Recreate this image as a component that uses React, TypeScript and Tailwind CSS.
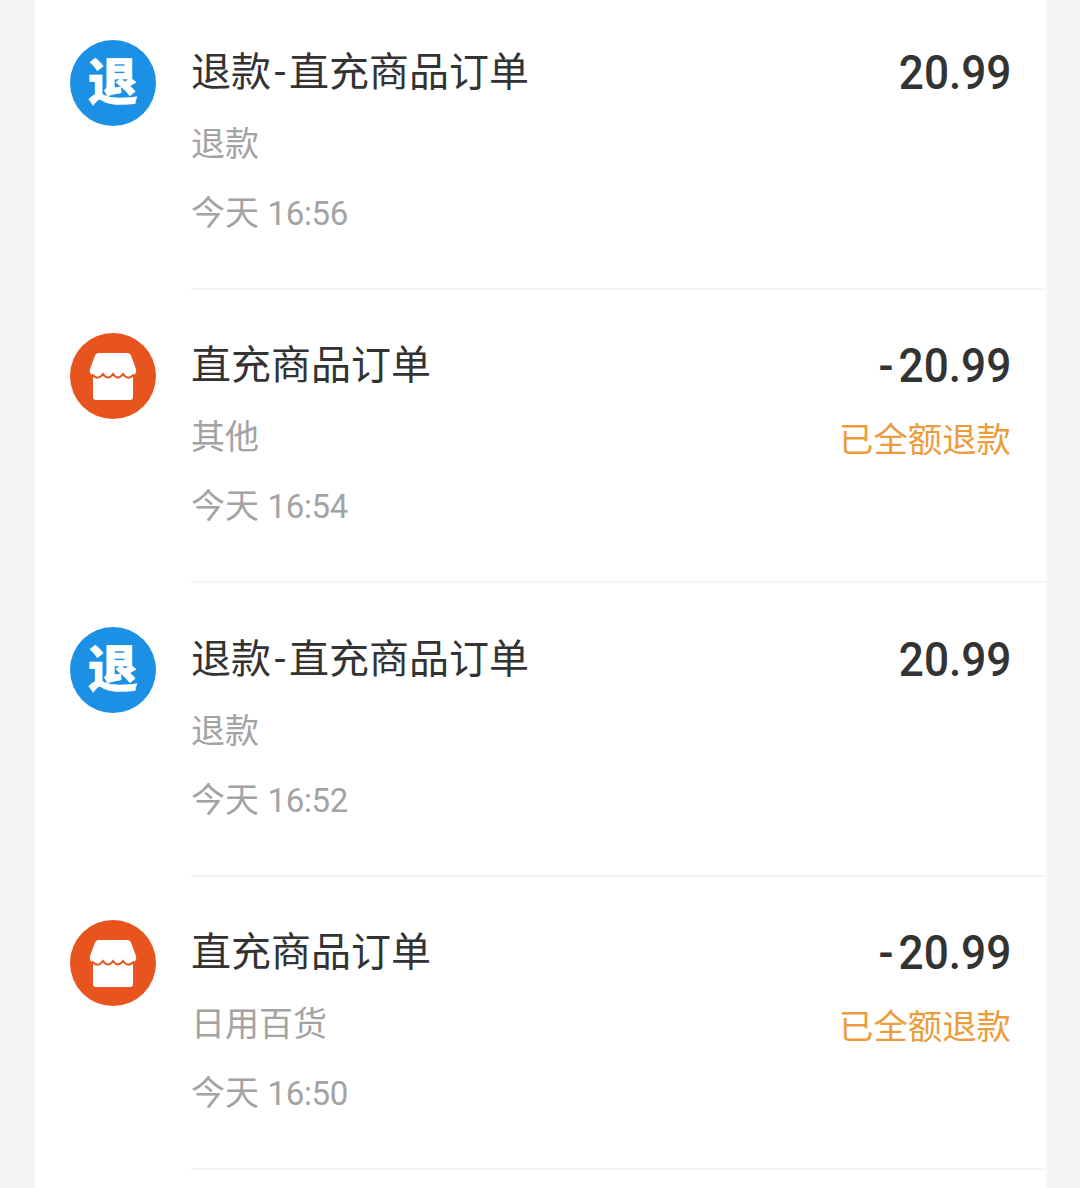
const FONT = "font-['Roboto','Noto_Sans_CJK_SC',sans-serif]";

type Txn = {
  kind: "refund" | "order";
  title: string;
  category: string;
  day: string;
  clock: string;
  amount: string;
  note?: string;
};

const TXNS: Txn[] = [
  { kind: "refund", title: "直充商品订单", category: "退款", day: "今天", clock: "16:56", amount: "20.99" },
  { kind: "order", title: "直充商品订单", category: "其他", day: "今天", clock: "16:54", amount: "20.99", note: "已全额退款" },
  { kind: "refund", title: "直充商品订单", category: "退款", day: "今天", clock: "16:52", amount: "20.99" },
  { kind: "order", title: "直充商品订单", category: "日用百货", day: "今天", clock: "16:50", amount: "20.99", note: "已全额退款" },
];

function RefundIcon() {
  return (
    <div className="flex h-[86px] w-[86px] shrink-0 items-center justify-center rounded-full bg-[#1b90e4] text-[50px] leading-none font-black text-white [-webkit-text-stroke:0.5px_white]">
      退
    </div>
  );
}

function ShopIcon() {
  return (
    <div className="flex h-[86px] w-[86px] shrink-0 items-center justify-center rounded-full bg-[#e8541e]">
      <svg width="48" height="48" viewBox="0 0 48 48" fill="none">
        <rect x="4" y="18" width="40" height="30" rx="3" fill="#fff" />
        <path
          d="M10 1H38c2 0 3.500 1 4.200 3L47 17c1 3.500-1 6.500-4 6.500H5c-3 0-5-3-4-6.500L5.800 4C6.500 2 8 1 10 1z"
          fill="#fff"
        />
        <path
          d="M3 22.500Q9 29 14 22Q19 29 24 22Q29 29 34 22Q39 29 45 22.500"
          stroke="#e8541e"
          strokeWidth="2"
        />
      </svg>
    </div>
  );
}

function Row({ txn, first }: { txn: Txn; first: boolean }) {
  return (
    <div className={`flex ${first ? "h-[290px] pt-[40px]" : "h-[293.300px] pt-[43.400px]"}`}>
      <div className="w-[156px] shrink-0 pl-[35px]">
        {txn.kind === "refund" ? <RefundIcon /> : <ShopIcon />}
      </div>
      <div className="flex flex-1 justify-between border-b-2 border-[#f4f4f4] pr-[35px]">
        <div className="flex flex-col">
          <div className="mt-[1px] h-[64px] text-[40px] leading-[64px] text-[#333333]">
            {txn.kind === "refund" && (
              <>
                退款<span className="mx-[3.500px]">-</span>
              </>
            )}
            {txn.title}
          </div>
          <div className="mt-[9px] h-[60px] text-[34px] leading-[60px] text-[#a3a3a3]">{txn.category}</div>
          <div className="mt-[9px] h-[60px] text-[34px] leading-[60px] text-[#a3a3a3]">
            {txn.day} <span className="text-[33px] tracking-[-0.300px]">{txn.clock}</span>
          </div>
        </div>
        <div className="flex flex-col items-end">
          <div className="mt-[1px] h-[64px] origin-right scale-x-[0.92] text-[48px] leading-[64px] font-medium text-[#333333]">
            {txn.kind === "order" && <span className="mr-[5.500px]">-</span>}
            {txn.amount}
          </div>
          {txn.note && (
            <div className="mt-[12px] h-[60px] text-[34.400px] leading-[60px] text-[#ec9c3c]">{txn.note}</div>
          )}
        </div>
      </div>
    </div>
  );
}

export default function App() {
  return (
    <div className={`h-[1188px] w-[1080px] overflow-hidden bg-[#f5f5f5] pr-[34px] pl-[35px] ${FONT}`}>
      <div className="h-full bg-white">
        {TXNS.map((txn, i) => (
          <Row key={i} txn={txn} first={i === 0} />
        ))}
      </div>
    </div>
  );
}
